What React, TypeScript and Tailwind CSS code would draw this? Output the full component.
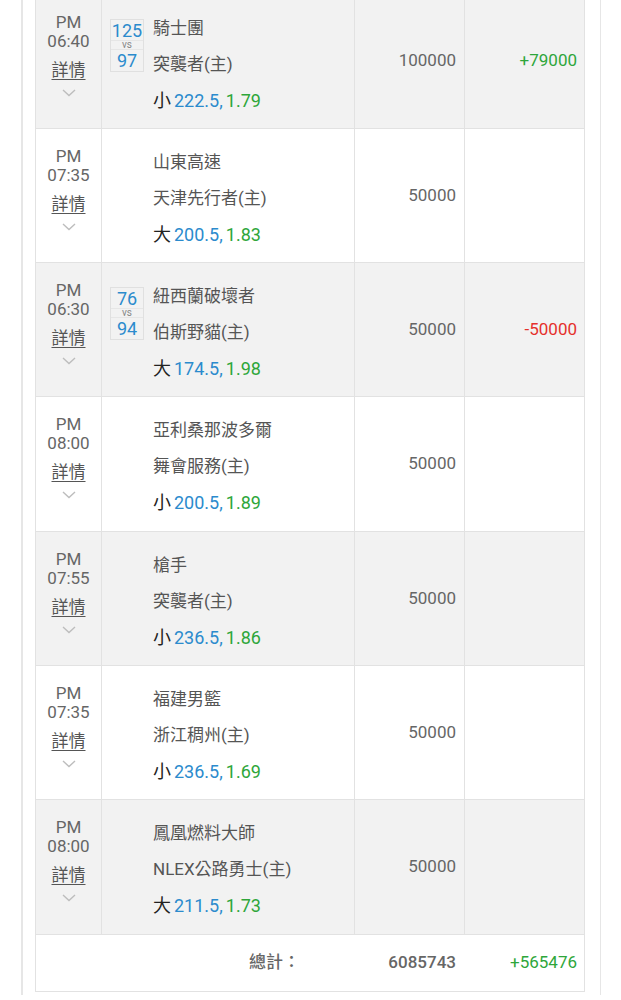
const games = [
  { time: '06:40', score: ['125', '97'], away: '騎士團', home: '突襲者(主)', pick: '小', line: '222.5', odds: '1.79', amount: '100000', result: '+79000' },
  { time: '07:35', away: '山東高速', home: '天津先行者(主)', pick: '大', line: '200.5', odds: '1.83', amount: '50000', result: '' },
  { time: '06:30', score: ['76', '94'], away: '紐西蘭破壞者', home: '伯斯野貓(主)', pick: '大', line: '174.5', odds: '1.98', amount: '50000', result: '-50000' },
  { time: '08:00', away: '亞利桑那波多爾', home: '舞會服務(主)', pick: '小', line: '200.5', odds: '1.89', amount: '50000', result: '' },
  { time: '07:55', away: '槍手', home: '突襲者(主)', pick: '小', line: '236.5', odds: '1.86', amount: '50000', result: '' },
  { time: '07:35', away: '福建男籃', home: '浙江稠州(主)', pick: '小', line: '236.5', odds: '1.69', amount: '50000', result: '' },
  { time: '08:00', away: '鳳凰燃料大師', home: 'NLEX公路勇士(主)', pick: '大', line: '211.5', odds: '1.73', amount: '50000', result: '' },
];

const Chevron = () => (
  <svg width="14" height="8" viewBox="0 0 14 8" fill="none" className="mt-[9px]">
    <path d="M1 1l6 5.5L13 1" stroke="#bdbdbd" strokeWidth="1.4" />
  </svg>
);

type Game = (typeof games)[number] & { score?: string[] };

const Row = ({ game, index }: { game: Game; index: number }) => {
  const bg = index % 2 === 0 ? 'bg-[#f2f2f2]' : 'bg-white';
  const resultColor = game.result.startsWith('-') ? 'text-[#e5302b]' : 'text-[#2ea63a]';
  return (
    <div className={`grid grid-cols-[66px_253px_110px_120px] h-[134.33px] ${bg}`}>
      {/* time */}
      <div className="flex flex-col items-center pt-[18px] border-r border-b border-[#e2e2e2] text-[#666]">
        <span className="leading-[19px]">PM</span>
        <span className="leading-[19px]">{game.time}</span>
        <span className="leading-[20px] mt-[9px] underline underline-offset-[3px] text-[#555]">詳情</span>
        <Chevron />
      </div>
      {/* teams */}
      <div className="flex pl-[8px] border-r border-b border-[#e2e2e2]">
        <div className="w-[34px] pt-[24px]">
          {game.score && (
            <div className="flex flex-col border border-[#e0e0e0] text-[#2b8bcd] text-center">
              <span className="h-[21px] leading-[22px] text-[18px] border-b border-[#e6e6e6]">{game.score[0]}</span>
              <span className="h-[9px] text-[10px] leading-[8px] text-[#888] border-b border-[#e6e6e6]">vs</span>
              <span className="h-[21px] leading-[21px] text-[18px]">{game.score[1]}</span>
            </div>
          )}
        </div>
        <div className="flex flex-col pl-[9px] pt-[15px] leading-[36px] text-[#555]">
          <span>{game.away}</span>
          <span>{game.home}</span>
          <span className="mt-[1px] text-[18px]">
            <span className="text-[#222]">{game.pick}</span>
            <span className="text-[#2b8bcd] ml-[3px]">{game.line},</span>
            <span className="text-[#2ea63a] ml-[3px]">{game.odds}</span>
          </span>
        </div>
      </div>
      {/* amount */}
      <div className="flex items-center justify-end pr-[8px] border-r border-b border-[#e2e2e2] text-[#666]">
        {game.amount}
      </div>
      {/* result */}
      <div className={`flex items-center justify-end pr-[7px] border-r border-b border-[#e2e2e2] ${resultColor}`}>
        {game.result}
      </div>
    </div>
  );
};

export default function App() {
  return (
    <div
      className="w-[621px] h-[1000px] overflow-hidden bg-white text-[17px]"
      style={{ fontFamily: "Roboto, 'Noto Sans CJK TC', sans-serif" }}
    >
      <div className="ml-[21px] w-[580px] h-full border-l-2 border-r border-[#e6e6e6] pl-[12px] pr-[15px]">
        <div className="-mt-[5.5px] border-l border-[#e2e2e2]">
          {games.map((g, i) => (
            <Row key={i} game={g} index={i} />
          ))}
          <div className="flex items-center h-[57px] bg-white border-r border-b border-[#e2e2e2] font-medium text-[#666]">
            <span className="w-[264px] text-right">總計：</span>
            <span className="w-[156px] text-right">6085743</span>
            <span className="w-[121px] text-right text-[#2ea63a] font-normal">+565476</span>
          </div>
        </div>
      </div>
    </div>
  );
}
